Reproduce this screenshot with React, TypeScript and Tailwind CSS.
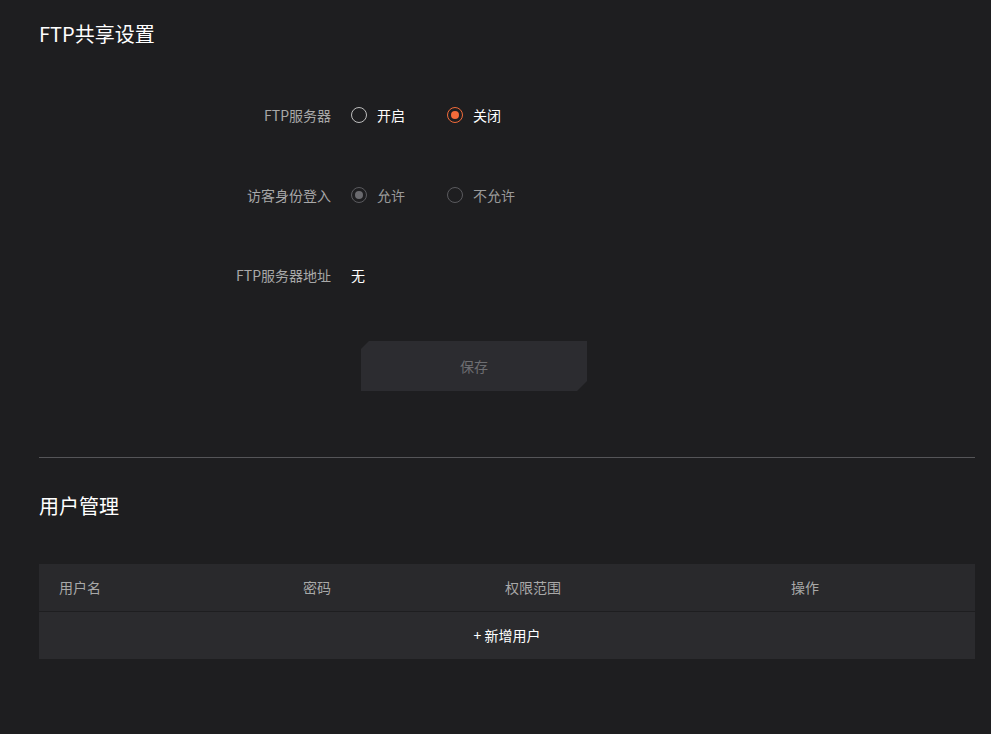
import React, { useState } from "react";

function Radio({ checked, disabled, label, onClick }: { checked: boolean; disabled?: boolean; label: string; onClick?: () => void }) {
  const ring = disabled ? "border-[#5a5a5e]" : checked ? "border-[#f26b3a]" : "border-[#bdbdbd]";
  const dot = disabled ? "bg-[#6a6a6e]" : "bg-[#f26b3a]";
  return (
    <button onClick={onClick} disabled={disabled} className="flex items-center gap-[10px]">
      <span className={`flex h-4 w-4 items-center justify-center rounded-full border ${ring}`}>
        {checked && <span className={`h-2 w-2 rounded-full ${dot}`} />}
      </span>
      <span className={`text-[14px] ${disabled ? "text-[#9a9a9a]" : "text-white"}`}>{label}</span>
    </button>
  );
}

export default function App() {
  const [server, setServer] = useState("off");

  return (
    <div
      className="min-h-[734px] w-full bg-[#1e1e20] pl-[39px] pr-4 pt-[22px] pb-[74px]"
      style={{ fontFamily: '"Microsoft YaHei", "Noto Sans CJK SC", sans-serif' }}
    >
      {/* FTP settings */}
      <h1 className="text-[20px] leading-6 text-white">FTP共享设置</h1>

      <div className="mt-[57px] flex flex-col gap-[56px]">
        <div className="flex h-6 items-center">
          <span className="w-[292px] text-right text-[14px] text-[#a8a8a8]">FTP服务器</span>
          <div className="ml-5 flex gap-[42px]">
            <Radio checked={server === "on"} label="开启" onClick={() => setServer("on")} />
            <Radio checked={server === "off"} label="关闭" onClick={() => setServer("off")} />
          </div>
        </div>
        <div className="flex h-6 items-center">
          <span className="w-[292px] text-right text-[14px] text-[#a8a8a8]">访客身份登入</span>
          <div className="ml-5 flex gap-[42px]">
            <Radio checked disabled label="允许" />
            <Radio checked={false} disabled label="不允许" />
          </div>
        </div>
        <div className="flex h-6 items-center">
          <span className="w-[292px] text-right text-[14px] text-[#a8a8a8]">FTP服务器地址</span>
          <span className="ml-5 text-[14px] text-white">无</span>
        </div>
      </div>

      <div className="mt-[54px] pl-[322px]">
        <button
          disabled
          className="h-[50px] w-[226px] bg-[#2c2c30] text-[14px] text-[#6e6e72] [clip-path:polygon(8px_0,100%_0,100%_calc(100%-10px),calc(100%-10px)_100%,0_100%,0_8px)]"
        >
          保存
        </button>
      </div>

      <div className="mt-[66px] h-px bg-[#555558]" />

      {/* User management */}
      <h2 className="mt-[36px] text-[20px] leading-6 text-white">用户管理</h2>

      <div className="mt-[46px]">
        <div className="grid h-[47px] grid-cols-[244px_202px_286px_204px] items-center bg-[#29292c] text-[14px] text-[#a8a8a8]">
          <span className="pl-5">用户名</span>
          <span className="pl-5">密码</span>
          <span className="pl-5">权限范围</span>
          <span className="pl-5">操作</span>
        </div>
        <div className="mt-px flex h-[47px] items-center justify-center bg-[#2b2b2e] text-[14px] text-white">
          +&nbsp;新增用户
        </div>
      </div>
    </div>
  );
}
